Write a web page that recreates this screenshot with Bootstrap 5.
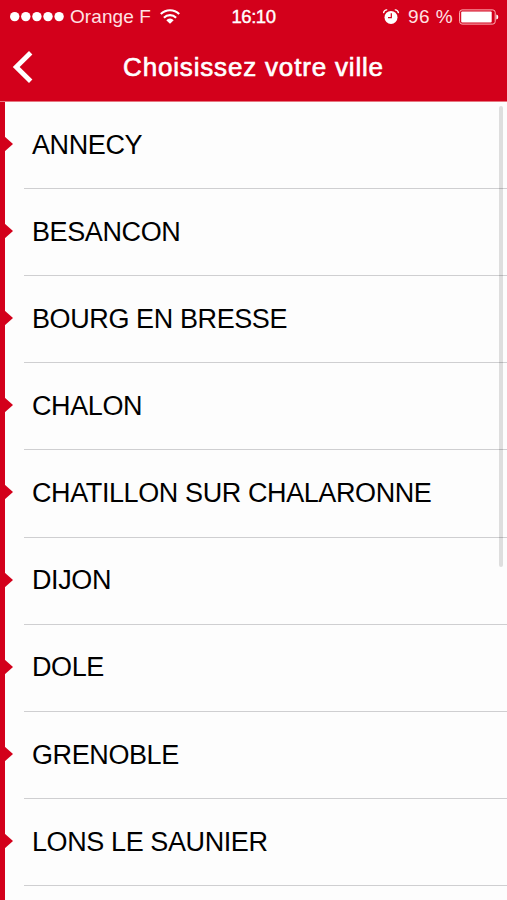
<!DOCTYPE html>
<html lang="fr">
<head>
<meta charset="utf-8">
<meta name="viewport" content="width=device-width, initial-scale=1">
<title>Choisissez votre ville</title>
<link href="https://cdn.jsdelivr.net/npm/bootstrap@5.3.0/dist/css/bootstrap.min.css" rel="stylesheet">
<style>
  :root { --brand: #d3001b; }
  body { font-family: "Liberation Sans", Arial, sans-serif; background: #fdfdfd; color: #000; }
  .screen { height: 900px; }
  .topbar { background: var(--brand); height: 102px; border-bottom: 1px solid #e67680; }
  .status { height: 33px; font-size: 19px; line-height: 33px; color: #ffe2e4; display: grid; grid-template-columns: 1fr auto 1fr; }
  .status svg, .heading svg { display: block; flex: none; }
  .carrier { letter-spacing: .08px; margin-left: 6px; margin-right: 9px; }
  .clock { font-size: 18.5px; color: #fff; -webkit-text-stroke: .4px #fff; letter-spacing: -.45px; }
  .charge { letter-spacing: .45px; margin: 0 6px 0 9px; }
  .heading { height: 68px; display: grid; grid-template-columns: 40px 1fr 40px; }
  .heading h1 { font-size: 26px; font-weight: 400; letter-spacing: .82px; line-height: 32px; -webkit-text-stroke: .65px #fff; }
  .cities { border-left: 5px solid var(--brand); height: 798px; }
  .city { height: 87.12px; padding-left: 19px; flex: none; }
  .city .name { border-bottom: 1px solid #cfcfd1; padding-left: 8px; font-size: 27px; letter-spacing: -.4px; }
  .city::before { content: ""; position: absolute; left: -1px; top: 34px; border: 8px solid transparent; border-left: 9px solid var(--brand); border-right: 0; }
  .thumb { width: 4px; height: 461px; top: 4px; right: 4px; background: rgba(0,0,0,.12); border-radius: 2px; }
</style>
</head>
<body>
<div class="screen d-flex flex-column overflow-hidden">
  <header class="topbar text-white flex-shrink-0">
    <div class="status">
      <div class="d-flex align-items-center">
        <svg class="ms-2" width="56" height="12" viewBox="0 0 56 12" fill="#fff"><circle cx="6.7" cy="5.6" r="4.7"/><circle cx="17.8" cy="5.6" r="4.7"/><circle cx="28.9" cy="5.6" r="4.7"/><circle cx="40" cy="5.6" r="4.7"/><circle cx="51.1" cy="5.6" r="4.7"/></svg>
        <span class="carrier text-nowrap">Orange F</span>
        <svg width="20" height="16" viewBox="0 0 20 16" fill="none" stroke="#fff" stroke-width="2.1"><path d="M.8 5a13 13 0 0 1 18.4 0M3.9 8.7a8.5 8.5 0 0 1 12.2 0"/><path d="M10 14.8 6.3 11.2a5 5 0 0 1 7.4 0z" fill="#fff" stroke="none"/></svg>
      </div>
      <div class="clock">16:10</div>
      <div class="d-flex align-items-center justify-content-end pe-2">
        <svg width="16" height="16" viewBox="0 0 16 16"><circle cx="8" cy="8.4" r="6.5" fill="#fff"/><path d="M.7 4.2A3 3 0 0 1 4.2.9M11.8.9a3 3 0 0 1 3.5 3.3" fill="none" stroke="#fff" stroke-width="1.4"/><path d="M8.3 4.3v4.4H5" fill="none" stroke="#d3001b" stroke-width="1.2"/></svg>
        <span class="charge text-nowrap">96 %</span>
        <svg width="40" height="16" viewBox="0 0 40 16"><rect x=".6" y=".9" width="35.6" height="14.2" rx="2.5" fill="none" stroke="#ffb4b9" stroke-width="1"/><rect x="2.2" y="2.5" width="30.5" height="11" rx="1" fill="#fff"/><path d="M37.3 5.5q2 .4 2 2.5t-2 2.5z" fill="#fff"/></svg>
      </div>
    </div>
    <div class="heading align-items-center">
      <svg width="40" height="34" viewBox="0 0 40 34" fill="none" stroke="#fff" stroke-width="4.8"><path d="M30.7 2.7 16.2 17 30.7 31.3"/></svg>
      <h1 class="m-0 text-center text-nowrap">Choisissez votre ville</h1>
    </div>
  </header>
  <main class="cities position-relative flex-shrink-0">
    <div class="d-flex flex-column">
      <div class="city position-relative"><div class="name h-100 d-flex align-items-center">ANNECY</div></div>
      <div class="city position-relative"><div class="name h-100 d-flex align-items-center">BESANCON</div></div>
      <div class="city position-relative"><div class="name h-100 d-flex align-items-center">BOURG EN BRESSE</div></div>
      <div class="city position-relative"><div class="name h-100 d-flex align-items-center">CHALON</div></div>
      <div class="city position-relative"><div class="name h-100 d-flex align-items-center">CHATILLON SUR CHALARONNE</div></div>
      <div class="city position-relative"><div class="name h-100 d-flex align-items-center">DIJON</div></div>
      <div class="city position-relative"><div class="name h-100 d-flex align-items-center">DOLE</div></div>
      <div class="city position-relative"><div class="name h-100 d-flex align-items-center">GRENOBLE</div></div>
      <div class="city position-relative"><div class="name h-100 d-flex align-items-center">LONS LE SAUNIER</div></div>
    </div>
    <div class="thumb position-absolute"></div>
  </main>
</div>
<script src="https://cdn.jsdelivr.net/npm/bootstrap@5.3.0/dist/js/bootstrap.bundle.min.js"></script>
</body>
</html>
